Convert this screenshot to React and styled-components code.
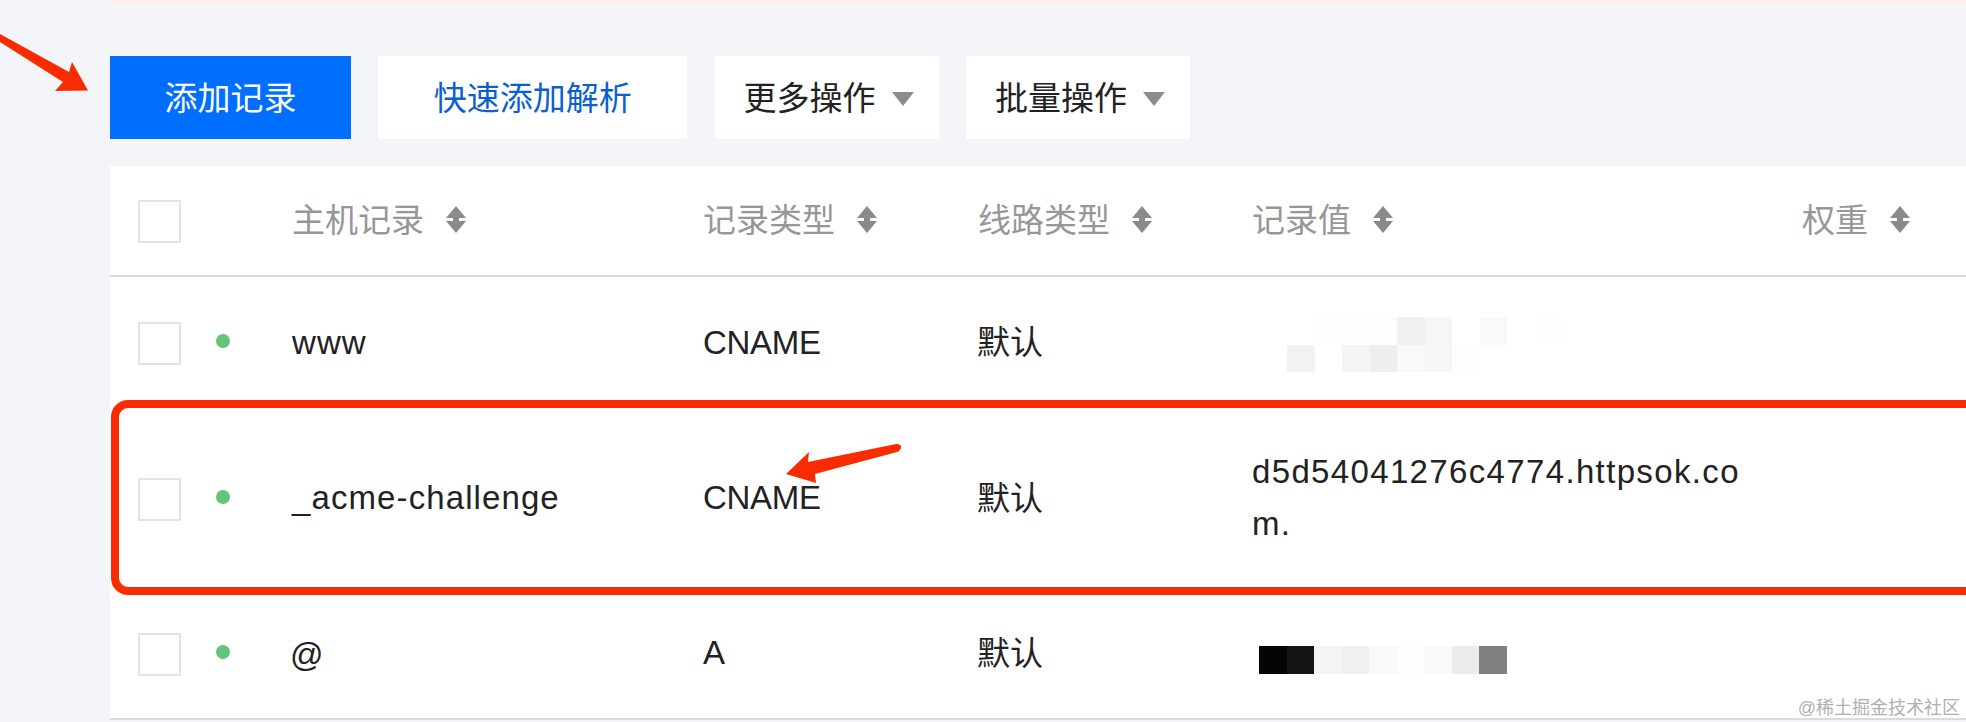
import React from 'react'
import styled, { createGlobalStyle } from 'styled-components'

const GlobalStyle = createGlobalStyle`
  html, body {
    margin: 0;
    padding: 0;
    background: #f3f5f9;
  }
`

const Page = styled.div`
  position: relative;
  width: 1966px;
  height: 722px;
  overflow: hidden;
  background: #f3f5f9;
  font-family: "Liberation Sans", "Noto Sans CJK SC", sans-serif;
  font-size: 33px;
  color: #222;
`

const TopStrip = styled.div`
  height: 3px;
  margin-left: 110px;
  background: #fdeee8;
`

const Toolbar = styled.div`
  display: flex;
  gap: 27.3px;
  height: 83px;
  margin: 53px 0 27px 110px;
`

const Button = styled.div`
  box-sizing: border-box;
  display: flex;
  align-items: center;
  justify-content: center;
  gap: 16px;
  width: ${p => p.$width}px;
  padding: 0 0 4px ${p => (p.$menu ? '4px' : '0')};
  background: ${p => (p.$primary ? '#006eff' : '#fff')};
  color: ${p => (p.$primary ? '#fff' : p.$link ? '#0b5fd0' : '#222')};
`

const Caret = styled.span`
  width: 0;
  height: 0;
  margin-top: 7px;
  border-left: 11px solid transparent;
  border-right: 11px solid transparent;
  border-top: 14px solid #8c8c8c;
`

const Table = styled.div`
  margin-left: 110px;
  background: #fff;
`

const Row = styled.div`
  display: grid;
  grid-template-columns: 182px 411px 275px 274px 550px 1fr;
  align-items: center;
  height: ${p => p.$height}px;
  border-bottom: ${p => (p.$line ? '2px solid #d8dce0' : 'none')};
`

const SelectCell = styled.div`
  display: flex;
  align-items: center;
  gap: 35px;
  padding-left: 28px;
`

const Checkbox = styled.span`
  box-sizing: border-box;
  width: 43px;
  height: 43px;
  margin-top: 2px;
  background: #fff;
  border: 2px solid #e2e4e8;
`

const Dot = styled.span`
  width: 14px;
  height: 14px;
  margin-top: -3px;
  border-radius: 50%;
  background: #62c57a;
`

const HeadCell = styled.div`
  display: flex;
  align-items: center;
  gap: 21px;
  padding-bottom: 2px;
  color: #979797;
`

const HeadLabel = styled.span`
  margin-bottom: 3px;
`

const Cell = styled.div`
  letter-spacing: ${p => p.$spacing}px;
`

const AtSign = styled.span`
  display: block;
  margin: 4px 0 0 -2px;
`

const RouteCell = styled.div`
  margin-left: -1px;
  padding-bottom: 5px;
`

const ValueCell = styled.div`
  width: 500px;
  line-height: 52px;
  letter-spacing: 1.35px;
  word-break: break-all;
`

const Mosaic = styled.div`
  display: grid;
  grid-template-columns: repeat(${p => p.$cols}, 27.5px);
  grid-auto-rows: 27.5px;
  margin: ${p => p.$margin};
`

const Pixel = styled.span`
  background: ${p => p.$color};
`

const RedFrame = styled.div`
  position: absolute;
  left: 111px;
  top: 400px;
  right: -40px;
  height: 195px;
  box-sizing: border-box;
  border: 8px solid #f92b00;
  border-radius: 17px;
`

const ArrowSvg = styled.svg`
  position: absolute;
  left: ${p => p.$left}px;
  top: ${p => p.$top}px;
`

const Watermark = styled.div`
  position: absolute;
  right: 6px;
  bottom: 3px;
  font-size: 18px;
  line-height: 22px;
  color: #aeb0b2;
`

function SortIcon() {
  return (
    <svg width="22" height="27" viewBox="0 0 22 27">
      <path d="M11 0 L21 12 H14 V15 H21 L11 27 L1 15 H8 V12 H1 Z" fill="#8a8a8a" />
    </svg>
  )
}

const headers = ['主机记录', '记录类型', '线路类型', '记录值', '权重']

const blurTop = ['#fff', '#fefefe', '#fefefe', '#fefefe', '#f1f1f1', '#f6f6f6', '#fff', '#f9f9f9', '#fff', '#fefefe']
const blurBottom = ['#f2f2f2', '#fff', '#f5f5f5', '#eee', '#f9f9f9', '#f7f7f7', '#fefefe', '#fff', '#fff', '#fff']
const darkPixels = ['#050505', '#141414', '#f4f4f4', '#f0f0f0', '#f9f9f9', '#fefefe', '#f9f9f9', '#ececec', '#808080']

const records = [
  {
    host: 'www',
    type: 'CNAME',
    height: 131,
    value: (
      <Mosaic $cols={10} $margin="4px 0 0 35px">
        {[...blurTop, ...blurBottom].map((c, i) => <Pixel key={i} $color={c} />)}
      </Mosaic>
    ),
  },
  {
    host: '_acme-challenge',
    type: 'CNAME',
    height: 180,
    value: <ValueCell>d5d54041276c4774.httpsok.com.</ValueCell>,
  },
  {
    host: <AtSign>@</AtSign>,
    type: 'A',
    height: 130,
    line: true,
    value: (
      <Mosaic $cols={9} $margin="14px 0 0 7px">
        {darkPixels.map((c, i) => <Pixel key={i} $color={c} />)}
      </Mosaic>
    ),
  },
]

function App() {
  return (
    <Page>
      <GlobalStyle />
      <TopStrip />
      <Toolbar>
        <Button $primary $width={241}>添加记录</Button>
        <Button $link $width={309}>快速添加解析</Button>
        <Button $menu $width={224}>更多操作<Caret /></Button>
        <Button $menu $width={224}>批量操作<Caret /></Button>
      </Toolbar>
      <Table>
        <Row $height={109} $line>
          <SelectCell><Checkbox /></SelectCell>
          {headers.map(h => (
            <HeadCell key={h}><HeadLabel>{h}</HeadLabel><SortIcon /></HeadCell>
          ))}
        </Row>
        {records.map(r => (
          <Row key={r.type + r.height} $height={r.height} $line={r.line}>
            <SelectCell><Checkbox /><Dot /></SelectCell>
            <Cell $spacing={1.1}>{r.host}</Cell>
            <Cell $spacing={-0.3}>{r.type}</Cell>
            <RouteCell>默认</RouteCell>
            {r.value}
          </Row>
        ))}
      </Table>

      <RedFrame />
      <ArrowSvg $left={0} $top={30} width="92" height="64" viewBox="0 0 92 64">
        <path d="M0 4 L69 42 L72 32 L88 60.5 L55 61 L63 52 L0 12 Z" fill="#f92b00" />
      </ArrowSvg>
      <ArrowSvg $left={780} $top={436} width="126" height="50" viewBox="0 0 126 50">
        <path d="M6 38 L29 16 L28 26 L116 8 Q122 8 121 12 Q120 15 117 16 L35 38 L36 47 Z" fill="#f92b00" />
      </ArrowSvg>
      <Watermark>@稀土掘金技术社区</Watermark>
    </Page>
  )
}

export default App
